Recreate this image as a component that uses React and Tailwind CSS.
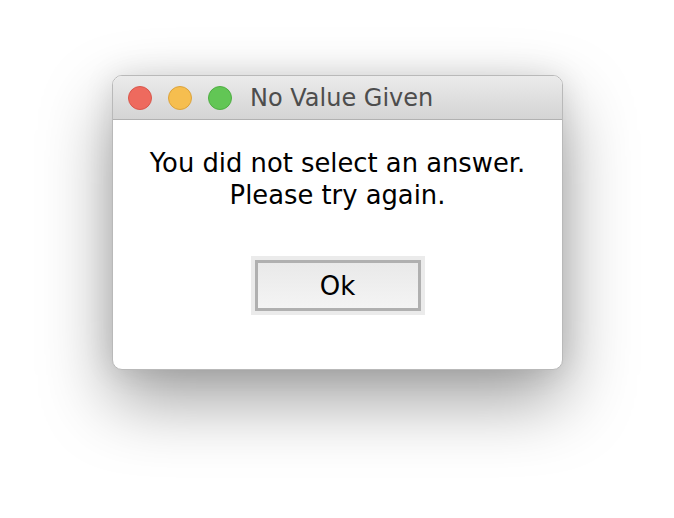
export default function App() {
  return (
    <div className="w-[674px] h-[518px] bg-white pt-[75px] pl-[112px] font-['DejaVu_Sans',sans-serif]">
      <div className="w-[451px] h-[295px] flex flex-col rounded-[10px] overflow-hidden bg-white border border-[#b9b9b9] shadow-[0_30px_70px_rgba(0,0,0,0.38),0_0_30px_rgba(0,0,0,0.1)]">
        <div className="h-[44px] shrink-0 flex items-center pl-[15px] gap-[16px] bg-gradient-to-b from-[#ebebeb] to-[#d4d4d4] border-b border-[#b1b1b1]">
          <span className="w-[24px] h-[24px] rounded-full bg-[#ee6a5e] border border-[#d9574c]" />
          <span className="w-[24px] h-[24px] rounded-full bg-[#f6be4f] border border-[#dca33c]" />
          <span className="w-[24px] h-[24px] rounded-full bg-[#62c655] border border-[#4fae43]" />
          <span className="ml-[2px] text-[24px] text-[#4d4d4d] leading-none">No Value Given</span>
        </div>
        <div className="flex-1 flex flex-col items-center pt-[27px]">
          <p className="text-[25.8px] leading-[32px] text-black text-center">
            You did not select an answer.
            <br />
            Please try again.
          </p>
          <div className="mt-[45px] p-[4px] bg-[#ebebeb]">
            <button className="w-[166px] h-[51px] border-[3px] border-[#b0b0b0] bg-gradient-to-b from-[#e9e9e9] to-[#f4f4f4] text-[26px] text-black leading-none">
              Ok
            </button>
          </div>
        </div>
      </div>
    </div>
  );
}
